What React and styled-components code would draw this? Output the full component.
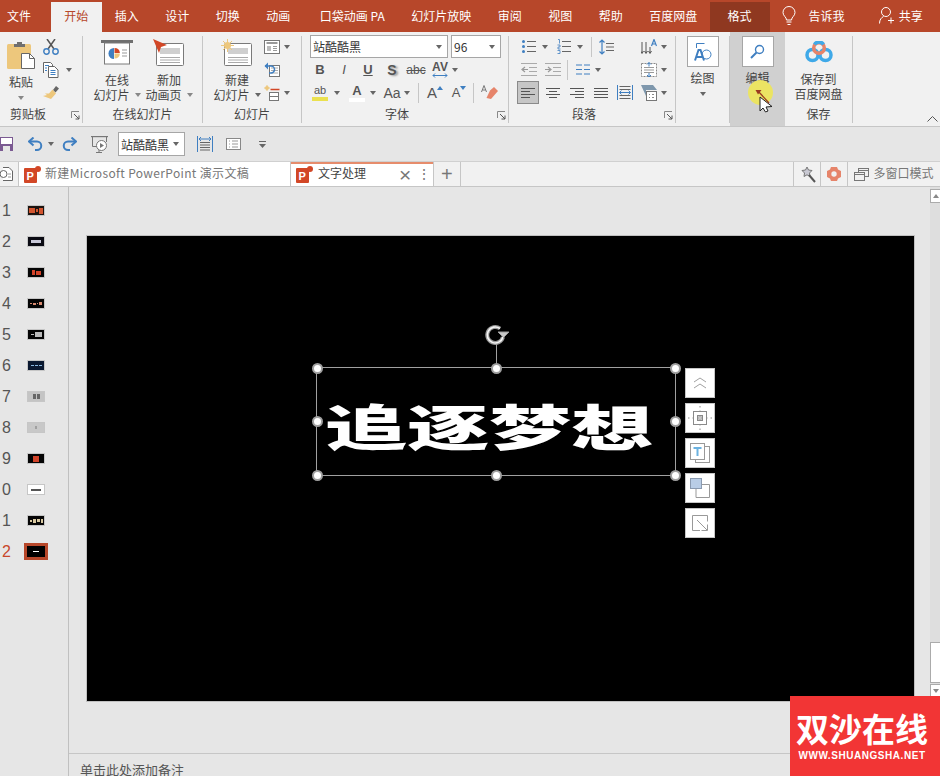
import React from 'react';
import styled, { createGlobalStyle } from 'styled-components';

const RED = '#b7472a';
const CJK = '"Noto Sans CJK SC", "Noto Sans", sans-serif';

const GlobalStyle = createGlobalStyle`
  html, body { margin: 0; padding: 0; width: 940px; height: 776px; overflow: hidden; }
  body { font-family: ${CJK}; color: #444; background: #e6e6e6; }
  * { box-sizing: border-box; }
  svg { display: block; flex: none; }
`;

const Page = styled.div`
  width: 940px;
  height: 776px;
  display: flex;
  flex-direction: column;
  position: relative;
  overflow: hidden;
`;

/* title bar / ribbon tabs */
const TabBar = styled.div`
  height: 32px;
  background: ${RED};
  display: flex;
  align-items: flex-end;
  flex: none;
`;

const RibbonTab = styled.div`
  height: 30px;
  padding: ${({ $first }) => ($first ? '0 20px 3px 7px' : '0 13.25px 3px')};
  margin-left: ${({ $left }) => $left || 0}px;
  display: flex;
  align-items: center;
  font-size: 12px;
  color: ${({ $active }) => ($active ? RED : '#fff')};
  background: ${({ $active }) => ($active ? '#f1f1f1' : 'transparent')};
`;

const FormatTab = styled(RibbonTab)`
  padding: 0 18px 3px;
  background: #8f3820;
`;

const TitleAction = styled.div`
  display: flex;
  align-items: center;
  gap: ${({ $gap }) => $gap}px;
  height: 30px;
  padding-bottom: 3px;
  margin-left: ${({ $left }) => $left}px;
  font-size: 12px;
  color: #fff;
`;

/* ribbon */
const Ribbon = styled.div`
  height: 95px;
  flex: none;
  display: flex;
  background: #f1f1f1;
  border-bottom: 1px solid #c6c6c6;
  position: relative;
`;

const Group = styled.div`
  width: ${({ $w }) => $w}px;
  margin: 4px 0 3px;
  display: flex;
  flex-direction: column;
  border-right: 1px solid #c6c6c6;
  flex: none;
`;

const HighlightGroup = styled(Group)`
  margin: 0;
  padding: 4px 0 3px;
  background: #d0d0d0;
  border-right: none;
  position: relative;
`;

const GroupBody = styled.div`
  flex: 1;
  display: flex;
  padding-left: ${({ $pad }) => $pad || 0}px;
  min-height: 0;
`;

const GroupLabel = styled.div`
  height: 20px;
  flex: none;
  display: grid;
  grid-template-columns: ${({ $shift }) => `${14 - ($shift || 0)}px 1fr ${14 + ($shift || 0)}px`};
  align-items: center;
  font-size: 12px;
  color: #444;
  text-align: center;
`;

const Launcher = styled.svg`
  justify-self: end;
  margin-right: 2px;
  margin-top: 5px;
`;

const BigButton = styled.div`
  width: ${({ $w }) => $w}px;
  display: flex;
  flex-direction: column;
  align-items: center;
  padding-top: ${({ $top }) => $top ?? 5}px;
  flex: none;
`;

const BigIcon = styled.div`
  height: ${({ $h }) => $h || 28}px;
  display: flex;
  align-items: center;
  justify-content: center;
  margin-bottom: ${({ $gap }) => $gap ?? 4}px;
`;

const BigText = styled.div`
  font-size: 12px;
  line-height: 15px;
  color: #444;
  text-align: center;
  white-space: nowrap;
  display: flex;
  align-items: center;
  justify-content: center;
  gap: 5px;
`;

const Caret = styled.i`
  display: block;
  flex: none;
  width: 0;
  height: 0;
  border-left: 3.5px solid transparent;
  border-right: 3.5px solid transparent;
  border-top: 4px solid ${({ $light }) => ($light ? '#888' : '#666')};
`;

const BelowCaret = styled(Caret)`
  margin-top: 7px;
`;

const SmallColumn = styled.div`
  display: flex;
  flex-direction: column;
  gap: 6px;
  margin-left: ${({ $left }) => $left || 0}px;
  padding-top: 2px;
`;

const SmallRow = styled.div`
  height: 17px;
  display: flex;
  align-items: center;
  gap: ${({ $gap }) => $gap ?? 4}px;
`;

const StackRows = styled.div`
  display: flex;
  flex-direction: column;
  flex: ${({ $grow }) => ($grow ? 1 : 'none')};
  margin-top: ${({ $top }) => $top || 0}px;
  margin-bottom: ${({ $bottom }) => $bottom || 0}px;
`;

const ComboRow = styled.div`
  display: flex;
  gap: 3px;
  margin-left: 8px;
`;

const Combo = styled.div`
  width: ${({ $w }) => $w}px;
  height: ${({ $h }) => $h || 23}px;
  background: #fff;
  border: 1px solid #a6a6a6;
  padding: 0 5px 0 2px;
  display: flex;
  align-items: center;
  justify-content: space-between;
  font-size: 12px;
  color: #333;
  flex: none;
`;

const ToolRow = styled.div`
  display: flex;
  align-items: center;
  height: 23px;
  padding-left: ${({ $pad }) => $pad || 0}px;
`;

const Cell = styled.div`
  width: ${({ $w }) => $w || 24}px;
  height: 100%;
  margin-left: ${({ $left }) => $left || 0}px;
  flex: none;
  display: flex;
  align-items: center;
  justify-content: center;
`;

const SelectedCell = styled.div`
  width: 22px;
  height: 23px;
  margin-right: 2px;
  background: #c6c6c6;
  border: 1px solid #8a8a8a;
  flex: none;
  display: flex;
  align-items: center;
  justify-content: center;
`;

const VLine = styled.i`
  display: block;
  flex: none;
  width: 1px;
  height: 20px;
  background: #c6c6c6;
  margin: 0 ${({ $r }) => $r ?? 4}px 0 ${({ $l }) => $l ?? 4}px;
`;

const FontGlyph = styled.span`
  font-family: "Liberation Sans", Arial, sans-serif;
  font-size: ${({ $s }) => $s || 13}px;
  font-weight: ${({ $b }) => ($b ? 700 : 400)};
  font-style: ${({ $i }) => ($i ? 'italic' : 'normal')};
  text-decoration: ${({ $d }) => $d || 'none'};
  text-shadow: ${({ $sh }) => ($sh ? '2px 1px 2px #999' : 'none')};
  color: #555;
  line-height: 1;
`;

const GlyphStack = styled.div`
  display: flex;
  flex-direction: column;
  align-items: center;
`;

const ColorBar = styled.i`
  display: block;
  width: 16px;
  height: 4px;
  margin-top: 1px;
  background: ${({ $c }) => $c};
`;

const BoxButton = styled.div`
  width: 32px;
  height: 31px;
  background: #fff;
  border: 1px solid #a6a6a6;
  display: flex;
  align-items: center;
  justify-content: center;
  margin-bottom: 3px;
`;

const Chevron = styled.svg`
  position: absolute;
  right: 2px;
  bottom: 4px;
`;

const ClickSpot = styled.i`
  position: absolute;
  left: 18px;
  top: 48px;
  width: 25px;
  height: 25px;
  border-radius: 50%;
  background: #ebe463;
`;

const Pointer = styled.svg`
  position: absolute;
  left: 25px;
  top: 56px;
`;

/* quick access toolbar */
const QuickBar = styled.div`
  height: 34px;
  flex: none;
  display: flex;
  align-items: center;
  background: #e6e6e6;
`;

const QuickItem = styled.div`
  margin-left: ${({ $left }) => $left}px;
  flex: none;
  display: flex;
  align-items: center;
`;

/* document tabs */
const DocTabs = styled.div`
  height: 26px;
  flex: none;
  display: flex;
  background: #f1f1f1;
  border-top: 1px solid #d0d0d0;
  border-bottom: 1px solid #c6c6c6;
`;

const DocTab = styled.div`
  width: ${({ $w }) => $w}px;
  display: flex;
  align-items: center;
  flex: none;
  padding-left: ${({ $pad }) => $pad || 0}px;
  font-size: 12px;
  color: ${({ $active }) => ($active ? '#444' : '#777')};
  background: ${({ $white }) => ($white ? '#fff' : 'transparent')};
  border-right: 1px solid #c6c6c6;
  box-shadow: ${({ $active }) => ($active ? 'inset 0 2px 0 #e68c6c' : 'none')};
  overflow: hidden;
  white-space: nowrap;
`;

const DocTabTitle = styled.span`
  margin-left: ${({ $left }) => $left}px;
  margin-top: -3px;
  letter-spacing: ${({ $spread }) => $spread || 0}px;
`;

const IconTab = styled(DocTab)`
  justify-content: center;
  padding: 0;
  gap: 4px;
  border-right: none;
  border-left: 1px solid #c6c6c6;
`;

const TabSpacer = styled.div`
  flex: 1;
`;

const TabX = styled.span`
  margin-left: ${({ $left }) => $left}px;
  font-family: "Liberation Sans", sans-serif;
  font-size: ${({ $s }) => $s}px;
  line-height: 1;
  color: #777;
`;

/* main area */
const Main = styled.div`
  flex: 1;
  display: flex;
  min-height: 0;
`;

const ThumbPanel = styled.div`
  width: 69px;
  flex: none;
  border-right: 1px solid #c0c0c0;
  padding-top: 8px;
  display: flex;
  flex-direction: column;
`;

const ThumbRow = styled.div`
  height: 31px;
  flex: none;
  display: flex;
  align-items: center;
  font-family: "Liberation Sans", sans-serif;
  font-size: 16px;
  color: ${({ $active }) => ($active ? '#c8472a' : '#555')};
`;

const ThumbNum = styled.span`
  width: 24px;
  padding-left: 2px;
  flex: none;
`;

const Thumb = styled.div`
  width: ${({ $active }) => ($active ? 24 : 18)}px;
  height: ${({ $active }) => ($active ? 17 : 11)}px;
  margin-left: ${({ $active }) => ($active ? 0 : 3)}px;
  border: ${({ $active }) => ($active ? `3px solid ${RED}` : '1px solid #c6c6c6')};
  background: ${({ $bg }) => $bg};
  flex: none;
`;

const Specks = styled.div`
  height: 100%;
  display: flex;
  align-items: center;
  justify-content: center;
  gap: 1px;
`;

const Speck = styled.i`
  display: block;
  width: ${({ $w }) => $w}px;
  height: ${({ $h }) => $h}px;
  background: ${({ $c }) => $c};
`;

const Workspace = styled.div`
  flex: 1;
  display: flex;
  flex-direction: column;
  min-width: 0;
`;

const Stage = styled.div`
  flex: 1;
  padding: 48px 0 0 17px;
  min-height: 0;
`;

const Slide = styled.div`
  width: 829px;
  height: 467px;
  background: #000;
  border: 1px solid #c0c0c0;
  position: relative;
`;

const Selection = styled.div`
  position: absolute;
  left: 229px;
  top: 131px;
  width: 360px;
  height: 109px;
  border: 1px solid #a0a0a0;
  display: flex;
  align-items: center;
  justify-content: center;
`;

const SlideText = styled.div`
  color: #fff;
  font-family: ${CJK};
  font-size: 82px;
  line-height: 1;
  font-weight: 900;
  white-space: nowrap;
  transform: translate(-7px, 3px) scaleY(0.6);
`;

const Handle = styled.i`
  position: absolute;
  left: ${({ $x }) => $x}%;
  top: ${({ $y }) => $y}%;
  width: 11px;
  height: 11px;
  margin: -5.5px 0 0 -5.5px;
  border-radius: 50%;
  background: #fff;
  border: 2px solid #a0a0a0;
`;

const RotateStem = styled.i`
  position: absolute;
  left: 50%;
  top: -24px;
  width: 1px;
  height: 24px;
  background: #a0a0a0;
`;

const RotateHandle = styled.svg`
  position: absolute;
  left: 50%;
  top: -44px;
  margin-left: -11px;
`;

const SideTools = styled.div`
  position: absolute;
  left: 598px;
  top: 132px;
  display: flex;
  flex-direction: column;
  gap: 5px;
`;

const SideTool = styled.div`
  width: 30px;
  height: 30px;
  background: #fff;
  border: 1px solid #c6c6c6;
  display: flex;
  align-items: center;
  justify-content: center;
`;

const Notes = styled.div`
  height: 23px;
  flex: none;
  border-top: 1px solid #c6c6c6;
  padding: 6px 0 0 11px;
  font-size: 13px;
  line-height: 20px;
  color: #555;
  white-space: nowrap;
`;

const ScrollBar = styled.div`
  width: 10px;
  flex: none;
  background: #dedede;
  display: flex;
  flex-direction: column;
  padding-top: 2px;
`;

const ScrollButton = styled.div`
  width: 10px;
  height: 14px;
  background: #fff;
  border: 1px solid #ababab;
  border-right: none;
  display: flex;
  align-items: center;
  justify-content: center;
`;

const ScrollThumb = styled.div`
  width: 10px;
  height: 41px;
  margin: 439px 0 1px;
  background: #fff;
  border: 1px solid #ababab;
  border-right: none;
`;

const ScrollUp = styled.i`
  display: block;
  width: 0;
  height: 0;
  border-left: 3.5px solid transparent;
  border-right: 3.5px solid transparent;
  border-bottom: 4px solid #888;
`;

const Watermark = styled.div`
  position: absolute;
  right: 0;
  bottom: 0;
  width: 150px;
  height: 80px;
  background: #f23535;
  color: #fff;
  display: flex;
  flex-direction: column;
  align-items: center;
  padding: 14px 6px 0 0;
`;

const MarkTitle = styled.div`
  font-size: 33px;
  line-height: 36px;
  font-weight: 700;
  white-space: nowrap;
`;

const MarkUrl = styled.div`
  font-family: "Liberation Sans", sans-serif;
  font-size: 10px;
  line-height: 10px;
  font-weight: 700;
  letter-spacing: 0.55px;
  margin-top: 5px;
  white-space: nowrap;
`;

/* icons */
const Paste = () => (
  <svg width="29" height="28" viewBox="0 0 29 28">
    <rect x="0" y="3" width="24" height="25" rx="1.5" fill="#edc77c" />
    <path d="M7 6V3h3V1h5v2h3v3z" fill="#6f6f6f" />
    <path d="M14.5 12.5h8l5 5v10h-13z" fill="#fff" stroke="#666" />
    <path d="M22.5 12.5v5h5" fill="none" stroke="#666" />
  </svg>
);
const Scissors = () => (
  <svg width="16" height="16" viewBox="0 0 16 16" fill="none">
    <path d="M4 0l7 10M12 0L5 10" stroke="#555" strokeWidth="1.5" />
    <circle cx="3.5" cy="12.5" r="2.7" stroke="#3f7fc1" strokeWidth="1.4" />
    <circle cx="12.5" cy="12.5" r="2.7" stroke="#3f7fc1" strokeWidth="1.4" />
  </svg>
);
const CopyDocs = () => (
  <svg width="16" height="16" viewBox="0 0 16 16" fill="none">
    <path d="M.5 11V.5h7l2 2V5" fill="#fff" stroke="#666" />
    <path d="M5.5 4.5h6l3.500 3.500v7.500H5.500z" fill="#fff" stroke="#666" />
    <path d="M2 3.500h4M2 6h2M2 8.500h2M7.500 8.500h5M7.500 10.500h5M7.500 12.500h5" stroke="#3f7fc1" />
  </svg>
);
const Brush = () => (
  <svg width="17" height="16" viewBox="0 0 17 16">
    <path d="M10 5l3-4 3 2.500-3.500 4z" fill="#666" />
    <path d="M9.500 4.500L13 8.500 8 14 0 11l4-1-2-1.500 4 0z" fill="#edc77c" />
  </svg>
);
const OnlineSlides = () => (
  <svg width="33" height="25" viewBox="0 0 33 25">
    <rect x="0" y="0" width="32" height="3" fill="#6f6f6f" />
    <rect x="3.500" y="3" width="25" height="21" fill="#fff" stroke="#7a7a7a" />
    <path d="M13 8a5.500 5.500 0 1 0 0 11z" fill="#3f7fc1" />
    <path d="M13.500 8a5.500 5.500 0 0 1 5.400 5H13.500z" fill="#d24726" />
    <path d="M13.500 13.500h5.400a5.500 5.500 0 0 1-5.400 5z" fill="#edc77c" />
    <path d="M21 10h5M21 13h5M21 16h5" stroke="#999" />
  </svg>
);
const SlideBody = () => (
  <>
    <rect x="3.500" y="4.500" width="27" height="22" rx="1" fill="#fff" stroke="#7a7a7a" />
    <rect x="7" y="9" width="20" height="6" fill="#cfcfcf" />
    <path d="M7 18.500h20M7 21h20M7 23.500h20" stroke="#aaa" />
  </>
);
const AnimSlide = () => (
  <svg width="32" height="27" viewBox="0 0 32 27">
    <SlideBody />
    <path d="M0 0l14 6-6 2-2 6z" fill="#d24726" />
  </svg>
);
const NewSlide = () => (
  <svg width="32" height="27" viewBox="0 0 32 27">
    <SlideBody />
    <circle cx="6.500" cy="6.500" r="3.500" fill="#edc77c" />
    <path d="M6.500 0v13M0 6.500h13M2 2l9 9M11 2l-9 9" stroke="#edc77c" />
  </svg>
);
const LayoutIcon = () => (
  <svg width="16" height="14" viewBox="0 0 16 14" fill="none">
    <rect x=".5" y=".5" width="15" height="13" fill="#fff" stroke="#777" />
    <path d="M2.500 3h11" stroke="#999" strokeWidth="2" />
    <path d="M3 6h4v5H3z" fill="#bbb" />
    <path d="M9 6.500h4M9 8.500h4M9 10.500h4" stroke="#999" />
  </svg>
);
const ResetIcon = () => (
  <svg width="16" height="15" viewBox="0 0 16 15" fill="none">
    <rect x="5.500" y="3.500" width="10" height="11" fill="#fff" stroke="#777" />
    <path d="M7 6h7M7 8.500h7M7 11h7" stroke="#aaa" />
    <path d="M1 4h6a3 3 0 0 1 0 7H5" stroke="#3f7fc1" strokeWidth="1.500" />
    <path d="M4 .5L.5 4 4 7.500z" fill="#3f7fc1" />
  </svg>
);
const SectionIcon = () => (
  <svg width="16" height="16" viewBox="0 0 16 16" fill="none">
    <circle cx="3" cy="3" r="2" fill="#edc77c" />
    <path d="M3 0v6M0 3h6" stroke="#edc77c" />
    <path d="M6.500 4.500h9" stroke="#d24726" strokeWidth="1.500" />
    <rect x="5.500" y="7.500" width="9" height="8" fill="#fff" stroke="#777" />
    <path d="M5.500 11.500h9" stroke="#777" />
  </svg>
);
const Corner = () => (
  <Launcher width="9" height="9" viewBox="0 0 9 9" fill="none">
    <path d="M.5 7V.5H8" stroke="#888" />
    <path d="M3 3l5 5M8 4.500V8H4.500" stroke="#555" />
  </Launcher>
);
const AV = () => (
  <GlyphStack>
    <FontGlyph $s={12} $b>AV</FontGlyph>
    <svg width="16" height="5" viewBox="0 0 16 5" fill="none">
      <path d="M1 2.500h14M3 .5l-2 2 2 2M13 .5l2 2-2 2" stroke="#3f7fc1" />
    </svg>
  </GlyphStack>
);
const GrowFont = ({ up, c }) => (
  <>
    <FontGlyph $s={up ? 15 : 13}>A</FontGlyph>
    <svg width="6" height="4" viewBox="0 0 6 4" style={{ marginBottom: 10 }}>
      <path d={up ? 'M0 4l3-4 3 4z' : 'M0 0l3 4 3-4z'} fill={c} />
    </svg>
  </>
);
const Eraser = () => (
  <svg width="17" height="16" viewBox="0 0 17 16">
    <path d="M9 5.500l4-3.500 4 4-7 8-4.500-1z" fill="#e6846a" />
    <path d="M.5 7L3 .5 5.500 7M1.500 5h3" fill="none" stroke="#777" />
  </svg>
);
const ListIcon = ({ numbered }) => (
  <svg width="14" height="15" viewBox="0 0 14 15" fill="none">
    <path d="M5 2.500h9M5 7.500h9M5 12.500h9" stroke="#666" />
    {numbered ? (
      <path d="M1 .5h1.500v4M.5 6h2.500v2h-2v2h2.500M.5 11.500H3v3H.5" stroke="#3f7fc1" strokeWidth=".8" />
    ) : (
      <>
        <circle cx="1.500" cy="2.500" r="1.500" fill="#3f7fc1" />
        <circle cx="1.500" cy="7.500" r="1.500" fill="#3f7fc1" />
        <circle cx="1.500" cy="12.500" r="1.500" fill="#3f7fc1" />
      </>
    )}
  </svg>
);
const SpacingIcon = () => (
  <svg width="15" height="16" viewBox="0 0 15 16" fill="none">
    <path d="M3 1v14M.5 3.500L3 1l2.500 2.500M.5 12.500L3 15l2.500-2.500" stroke="#3f7fc1" strokeWidth="1.200" />
    <path d="M7 4.500h8M7 8h8M7 11.500h8" stroke="#666" />
  </svg>
);
const IndentIcon = ({ out }) => (
  <svg width="16" height="13" viewBox="0 0 16 13" fill="none">
    <path d="M0 .5h16M8 4.500h8M8 8.500h8M0 12.500h16" stroke="#aaa" />
    <path d={out ? 'M7 6.500H2M4 4L1 6.500 4 9' : 'M0 6.500h5M3 4l3 2.500L3 9'} stroke="#999" strokeWidth="1.200" />
  </svg>
);
const ColumnsIcon = () => (
  <svg width="14" height="11" viewBox="0 0 14 11" fill="none">
    <path d="M0 1h6M8 1h6M0 5.500h6M8 5.500h6M0 10h6M8 10h6" stroke="#3f7fc1" />
  </svg>
);
const alignRows = {
  left: [14, 9, 14, 9],
  center: [14, 8, 14, 8],
  right: [14, 9, 14, 9],
  justify: [14, 14, 14, 14],
};
const AlignIcon = ({ mode }) => (
  <svg width="14" height="10" viewBox="0 0 14 10" fill="none">
    {alignRows[mode].map((w, i) => {
      const x = mode === 'center' ? (14 - w) / 2 : mode === 'right' ? 14 - w : 0;
      return <path key={i} d={`M${x} ${i * 3 + 0.5}h${w}`} stroke="#555" />;
    })}
  </svg>
);
const DistributeIcon = () => (
  <svg width="16" height="15" viewBox="0 0 16 15" fill="none">
    <path d="M.5 0v15M15.500 0v15" stroke="#3f7fc1" />
    <path d="M2.500 1.500h11M2.500 4.500h11M2.500 10.500h11M2.500 13.500h11" stroke="#666" />
    <path d="M2.500 7.500h11M4.500 5.500l-2 2 2 2M11.500 5.500l2 2-2 2" stroke="#3f7fc1" />
  </svg>
);
const TextDirIcon = () => (
  <svg width="16" height="16" viewBox="0 0 16 16" fill="none">
    <path d="M1 3v11M5 3v11M9 8v6M-.5 12L1 14.500 2.500 12M3.500 12L5 14.500 6.500 12M7.500 12L9 14.500 10.500 12" stroke="#555" />
    <path d="M10.500 7L13 .5 15.500 7M11.500 5h3" stroke="#3f7fc1" strokeWidth="1.200" />
  </svg>
);
const TextAlignIcon = () => (
  <svg width="16" height="16" viewBox="0 0 16 16" fill="none">
    <rect x=".5" y="1.500" width="15" height="13" fill="#fff" stroke="#888" strokeDasharray="2 1" />
    <path d="M3 8h10M3 10.500h10M3 5.500h10" stroke="#999" />
    <path d="M8 .5v4M6 2.500l2-2 2 2M8 11v4M6 13l2 2 2-2" stroke="#3f7fc1" />
  </svg>
);
const SmartIcon = () => (
  <svg width="17" height="16" viewBox="0 0 17 16" fill="none">
    <path d="M0 0h12l4 5H5v6z" fill="#7e97ac" />
    <rect x="5.500" y="6.500" width="10" height="9" fill="#fff" stroke="#777" />
    <path d="M8 9.500h1M8 12.500h1M11 9.500h2M11 12.500h2" stroke="#888" />
  </svg>
);
const DrawIcon = () => (
  <svg width="18" height="18" viewBox="0 0 18 18" fill="none">
    <path d="M2.500 5V.5h8" stroke="#3f7fc1" />
    <circle cx="12.500" cy="11.500" r="4.500" fill="#fff" stroke="#3f7fc1" />
    <path d="M1 17.500L4.500 7h2L10 17.500M2.500 14h6" stroke="#3f7fc1" strokeWidth="2" />
  </svg>
);
const Search = () => (
  <svg width="15" height="15" viewBox="0 0 15 15" fill="none">
    <circle cx="9.500" cy="5.500" r="4" stroke="#3f7fc1" strokeWidth="1.400" />
    <path d="M6.500 8.500L1 14" stroke="#3f7fc1" strokeWidth="2" />
  </svg>
);
const BaiduCloud = () => (
  <svg width="28" height="22" viewBox="0 0 28 22" fill="none">
    <circle cx="7.500" cy="14" r="5.500" stroke="#3fa9e8" strokeWidth="3.500" />
    <circle cx="20.500" cy="14" r="5.500" stroke="#3fa9e8" strokeWidth="3.500" />
    <circle cx="14" cy="7" r="5.300" stroke="#e6846a" strokeWidth="3.500" />
    <path d="M9.500 3.500A5.300 5.300 0 0 1 18.500 3.500" stroke="#3fa9e8" strokeWidth="3.500" />
  </svg>
);
const Bulb = () => (
  <svg width="14" height="20" viewBox="0 0 14 20" fill="none" stroke="#fff">
    <path d="M4.500 14c0-3-3.500-4-3.500-7.500a6 6 0 0 1 12 0C13 10 9.500 11 9.500 14z" />
    <path d="M4.500 16h5M5.500 18.500h3" />
  </svg>
);
const UserPlus = () => (
  <svg width="15" height="17" viewBox="0 0 15 17" fill="none" stroke="#fff">
    <circle cx="7" cy="5" r="4.500" />
    <path d="M.5 16.500c0-4 2-6 4-7M9 13.500h6M12 10.500v6" />
  </svg>
);
const SaveIcon = () => (
  <svg width="13" height="14" viewBox="0 0 13 14">
    <rect x="0" y="0" width="13" height="14" fill="#7b5a92" />
    <rect x="1" y="1" width="11" height="6" fill="#fff" />
    <rect x="3" y="9" width="7" height="5" fill="#e6e6e6" />
  </svg>
);
const Undo = ({ flip }) => (
  <svg width="15" height="14" viewBox="0 0 15 14" fill="none" style={flip ? { transform: 'scaleX(-1)' } : undefined}>
    <path d="M2 4.500h7a4 4 0 0 1 0 8.500H7" stroke="#3f7fc1" strokeWidth="2" />
    <path d="M5.500 .5L1 4.500l4.500 4" stroke="#3f7fc1" strokeWidth="2" />
  </svg>
);
const PresentIcon = () => (
  <svg width="17" height="17" viewBox="0 0 17 17" fill="none">
    <path d="M0 .5h17" stroke="#777" strokeWidth="1.400" />
    <path d="M1.500 1v9.500H6M15.500 1v5" stroke="#777" />
    <circle cx="10.500" cy="9.500" r="5" fill="#fff" stroke="#777" />
    <path d="M9 7l4 2.500L9 12z" fill="#777" />
    <path d="M5 16.500h6M8 14v2" stroke="#777" />
  </svg>
);
const FitWidth = () => (
  <svg width="16" height="16" viewBox="0 0 16 16" fill="none">
    <path d="M.5 0v16M15.500 0v16" stroke="#3f7fc1" />
    <path d="M3 6.500h10M3 9h10M3 11.500h10M3 14h10" stroke="#666" />
    <path d="M2 3h12M4 1L2 3l2 2M12 1l2 2-2 2" stroke="#3f7fc1" />
  </svg>
);
const Outline = () => (
  <svg width="15" height="12" viewBox="0 0 15 12" fill="none">
    <rect x=".5" y=".5" width="14" height="11" fill="#fff" stroke="#888" />
    <path d="M3 3h1M3 6h1M3 9h1M6 3h6M6 6h6M6 9h6" stroke="#999" />
  </svg>
);
const MoreCaret = () => (
  <svg width="7" height="7" viewBox="0 0 7 7">
    <path d="M0 0h7v1H0zM0 3h7L3.500 7z" fill="#666" />
  </svg>
);
const PptBadge = () => (
  <svg width="17" height="17" viewBox="0 0 17 17">
    <rect x="0" y="2" width="13" height="15" rx="1" fill="#d24726" />
    <circle cx="14" cy="3" r="3" fill="#d24726" />
    <text x="2.500" y="13.500" fontSize="11" fontWeight="700" fontFamily="Liberation Sans" fill="#fff">P</text>
  </svg>
);
const HistoryDoc = () => (
  <svg width="13" height="14" viewBox="0 0 13 14" fill="none">
    <path d="M3 .5h6l3.500 3.500v9.500H3" fill="#fff" stroke="#666" />
    <circle cx="3.500" cy="7" r="3.500" fill="#fff" stroke="#666" />
    <path d="M8 7h3M8 10h3" stroke="#999" />
  </svg>
);
const Wand = () => (
  <svg width="17" height="17" viewBox="0 0 17 17" fill="none">
    <path d="M8 1l1.500 3 3.500.5-2.500 2.500.5 3.500-3-1.700-3 1.700.5-3.500L3 4.500 6.500 4z" fill="#c8c8d2" stroke="#777" />
    <path d="M10 9l6 7" stroke="#555" strokeWidth="2" />
  </svg>
);
const Flower = () => (
  <svg width="16" height="16" viewBox="0 0 16 16">
    <path d="M5 1h6l1 2.500L15 5v6l-3 1.500L11 15H5l-1-2.500L1 11V5l3-1.500z" fill="#e6846a" />
    <circle cx="8" cy="8" r="2.700" fill="#f1f1f1" />
  </svg>
);
const Windows = () => (
  <svg width="15" height="13" viewBox="0 0 15 13" fill="none">
    <rect x="4.500" y=".5" width="10" height="8" fill="#f1f1f1" stroke="#777" />
    <path d="M4.500 2.500h10" stroke="#777" />
    <rect x=".5" y="4.500" width="10" height="8" fill="#f1f1f1" stroke="#777" />
    <path d="M.5 6.500h10" stroke="#777" />
  </svg>
);
const Rotate = () => (
  <RotateHandle width="26" height="22" viewBox="0 0 26 22" fill="none">
    <path d="M15 4.500A8 8 0 1 0 18 13" stroke="#9a9a9a" strokeWidth="4" />
    <path d="M15 4.500A8 8 0 1 0 18 13" stroke="#f4f4f4" strokeWidth="1.600" />
    <path d="M13 8h11l-5.500 5.500z" fill="#c8c8c8" stroke="#9a9a9a" />
  </RotateHandle>
);
const ChevronsUp = () => (
  <svg width="14" height="12" viewBox="0 0 14 12" fill="none">
    <path d="M1 5l6-4 6 4M1 11l6-4 6 4" stroke="#a0a0a0" />
  </svg>
);
const Crosshair = () => (
  <svg width="24" height="24" viewBox="0 0 24 24" fill="none">
    <rect x="5.500" y="5.500" width="13" height="13" stroke="#8a8a8a" />
    <rect x="9.500" y="9.500" width="5" height="5" fill="#c8c8c8" stroke="#8a8a8a" />
    <path d="M0 12h24M12 0v24" stroke="#8a8a8a" strokeDasharray="1.500 3" />
  </svg>
);
const TextBoxes = () => (
  <svg width="20" height="20" viewBox="0 0 20 20" fill="none">
    <rect x="5.500" y="3.500" width="14" height="16" fill="#fff" stroke="#999" />
    <rect x=".5" y=".5" width="14" height="16" fill="#fff" stroke="#999" />
    <path d="M3.500 5h8M7.500 5v8" stroke="#6bb2e0" strokeWidth="2" />
  </svg>
);
const ShapeStack = () => (
  <svg width="20" height="20" viewBox="0 0 20 20" fill="none">
    <path d="M6 6.500h13.500v13H6z" stroke="#999" />
    <rect x=".5" y=".5" width="11" height="10" fill="#b9cde6" stroke="#8a9ab0" />
  </svg>
);
const Resize = () => (
  <svg width="16" height="16" viewBox="0 0 16 16" fill="none">
    <path d="M15.500 6.500V.5H.5v15H8" stroke="#999" />
    <path d="M5 5l10 10M9.500 15.500h6v-6" stroke="#999" />
  </svg>
);

/* speck rows stand in for the tiny slide previews */
const thumbs = [
  { bg: '#1c1410', c: '#d2552f', specks: [[6, 5], [2, 3], [4, 6]] },
  { bg: '#0a0a12', c: '#c8c8d8', specks: [[10, 3]] },
  { bg: '#050505', c: '#d2442a', specks: [[3, 5], [5, 4]] },
  { bg: '#050505', c: '#d88a70', specks: [[2, 1], [3, 2], [1, 1], [3, 3]] },
  { bg: '#050505', c: '#bbbbbb', specks: [[3, 1], [7, 5]] },
  { bg: '#0a1830', c: '#8ab8e0', specks: [[3, 1], [3, 1], [3, 1]] },
  { bg: '#c4c4c4', c: '#666666', specks: [[3, 5], [3, 5]] },
  { bg: '#c8c8c8', c: '#a0a0a0', specks: [[2, 3]] },
  { bg: '#050505', c: '#d2442a', specks: [[6, 6]] },
  { bg: '#ffffff', c: '#555555', specks: [[10, 2]] },
  { bg: '#050505', c: '#d8c8a0', specks: [[2, 2], [3, 4], [3, 3], [2, 4]] },
  { bg: '#000000', c: '#ffffff', specks: [[6, 1]] },
];

const handlePoints = [
  [0, 0], [50, 0], [100, 0], [0, 50], [100, 50], [0, 100], [50, 100], [100, 100],
];

const App = () => {
  return (
    <Page>
      <GlobalStyle />
      <TabBar>
        <RibbonTab $first>文件</RibbonTab>
        <RibbonTab $active>开始</RibbonTab>
        <RibbonTab>插入</RibbonTab>
        <RibbonTab>设计</RibbonTab>
        <RibbonTab>切换</RibbonTab>
        <RibbonTab>动画</RibbonTab>
        <RibbonTab $left={3}>口袋动画 PA</RibbonTab>
        <RibbonTab>幻灯片放映</RibbonTab>
        <RibbonTab>审阅</RibbonTab>
        <RibbonTab>视图</RibbonTab>
        <RibbonTab>帮助</RibbonTab>
        <RibbonTab>百度网盘</RibbonTab>
        <FormatTab $left={-1}>格式</FormatTab>
        <TitleAction $left={12} $gap={13}><Bulb />告诉我</TitleAction>
        <TitleAction $left={34} $gap={5}><UserPlus />共享</TitleAction>
      </TabBar>

      <Ribbon>
        <Group $w={83}>
          <GroupBody $pad={6}>
            <BigButton $w={30}>
              <BigIcon $gap={5}><Paste /></BigIcon>
              <BigText>粘贴</BigText>
              <BelowCaret $light />
            </BigButton>
            <SmallColumn $left={7}>
              <SmallRow><Scissors /></SmallRow>
              <SmallRow $gap={7}><CopyDocs /><Caret /></SmallRow>
              <SmallRow><Brush /></SmallRow>
            </SmallColumn>
          </GroupBody>
          <GroupLabel $shift={13}><span />剪贴板<Corner /></GroupLabel>
        </Group>

        <Group $w={120}>
          <GroupBody $pad={8}>
            <BigButton $w={52} $top={2}>
              <BigIcon $gap={6}><OnlineSlides /></BigIcon>
              <BigText>在线</BigText>
              <BigText>幻灯片<Caret $light /></BigText>
            </BigButton>
            <BigButton $w={52} $top={2}>
              <BigIcon $gap={6}><AnimSlide /></BigIcon>
              <BigText>新加</BigText>
              <BigText>动画页<Caret $light /></BigText>
            </BigButton>
          </GroupBody>
          <GroupLabel><span />在线幻灯片<span /></GroupLabel>
        </Group>

        <Group $w={99}>
          <GroupBody $pad={8}>
            <BigButton $w={52} $top={2}>
              <BigIcon $gap={6}><NewSlide /></BigIcon>
              <BigText>新建</BigText>
              <BigText>幻灯片<Caret /></BigText>
            </BigButton>
            <SmallColumn $left={1}>
              <SmallRow><LayoutIcon /><Caret /></SmallRow>
              <SmallRow><ResetIcon /></SmallRow>
              <SmallRow><SectionIcon /><Caret /></SmallRow>
            </SmallColumn>
          </GroupBody>
          <GroupLabel><span />幻灯片<span /></GroupLabel>
        </Group>

        <Group $w={207}>
          <StackRows $top={-1} $bottom={-2}>
            <ComboRow>
              <Combo $w={138}>站酷酷黑<Caret /></Combo>
              <Combo $w={50}>96<Caret /></Combo>
            </ComboRow>
            <ToolRow $pad={6}>
              <Cell><FontGlyph $b $s={13}>B</FontGlyph></Cell>
              <Cell><FontGlyph $i $s={13}>I</FontGlyph></Cell>
              <Cell><FontGlyph $b $s={13} $d="underline">U</FontGlyph></Cell>
              <Cell><FontGlyph $b $s={14} $sh>S</FontGlyph></Cell>
              <Cell><FontGlyph $s={12} $d="line-through">abc</FontGlyph></Cell>
              <Cell><AV /></Cell>
              <Caret />
            </ToolRow>
            <ToolRow $pad={6}>
              <Cell>
                <GlyphStack>
                  <FontGlyph $s={11}>ab</FontGlyph>
                  <ColorBar $c="#ebe14f" />
                </GlyphStack>
              </Cell>
              <Cell $w={10}><Caret /></Cell>
              <Cell $left={3}>
                <GlyphStack>
                  <FontGlyph $s={13} $b>A</FontGlyph>
                  <ColorBar $c="#fff" />
                </GlyphStack>
              </Cell>
              <Cell $w={8}><Caret /></Cell>
              <Cell $left={3}><FontGlyph $s={14}>Aa</FontGlyph></Cell>
              <Cell $w={6}><Caret /></Cell>
              <VLine $l={8} $r={4} />
              <Cell><GrowFont up c="#3f7fc1" /></Cell>
              <Cell><GrowFont c="#3f7fc1" /></Cell>
              <VLine $l={2} $r={3} />
              <Cell><Eraser /></Cell>
            </ToolRow>
          </StackRows>
          <GroupBody />
          <GroupLabel $shift={8}><span />字体<Corner /></GroupLabel>
        </Group>

        <Group $w={167}>
          <GroupBody $pad={8}>
            <StackRows $grow $top={-1} $bottom={-1}>
              <ToolRow>
                <Cell><ListIcon /></Cell>
                <Cell $w={8}><Caret /></Cell>
                <Cell $left={3}><ListIcon numbered /></Cell>
                <Cell $w={8}><Caret /></Cell>
                <VLine $l={7} $r={3} />
                <Cell $w={23}><SpacingIcon /></Cell>
              </ToolRow>
              <ToolRow>
                <Cell><IndentIcon out /></Cell>
                <Cell><IndentIcon /></Cell>
                <VLine $l={2} $r={3} />
                <Cell $w={24}><ColumnsIcon /></Cell>
                <Caret />
              </ToolRow>
              <ToolRow>
                <SelectedCell><AlignIcon mode="left" /></SelectedCell>
                <Cell><AlignIcon mode="center" /></Cell>
                <Cell><AlignIcon mode="right" /></Cell>
                <Cell><AlignIcon mode="justify" /></Cell>
                <Cell><DistributeIcon /></Cell>
              </ToolRow>
            </StackRows>
            <StackRows $top={-1} $bottom={-1}>
              <ToolRow><Cell $w={24}><TextDirIcon /></Cell><Caret /></ToolRow>
              <ToolRow><Cell $w={24}><TextAlignIcon /></Cell><Caret /></ToolRow>
              <ToolRow><Cell $w={24}><SmartIcon /></Cell><Caret /></ToolRow>
            </StackRows>
            <Cell $w={12} />
          </GroupBody>
          <GroupLabel $shift={8}><span />段落<Corner /></GroupLabel>
        </Group>

        <Group $w={54}>
          <GroupBody>
            <BigButton $w={53} $top={0}>
              <BoxButton><DrawIcon /></BoxButton>
              <BigText>绘图</BigText>
              <BelowCaret />
            </BigButton>
          </GroupBody>
        </Group>

        <HighlightGroup $w={55}>
          <GroupBody>
            <BigButton $w={55} $top={0}>
              <BoxButton><Search /></BoxButton>
              <BigText>编辑</BigText>
            </BigButton>
          </GroupBody>
          <ClickSpot />
          <Pointer width="20" height="26" viewBox="0 0 20 26">
            <path d="M5 9v14l3-3 2.500 4 2.500-1-2-4 6-.500z" fill="#fff" stroke="#222" />
            <path d="M3 3l11 12" stroke="#9a3a20" strokeWidth="1.300" />
            <path d="M.5 2h6L3 6.500z" fill="#9a3a20" />
          </Pointer>
        </HighlightGroup>

        <Group $w={68}>
          <GroupBody>
            <BigButton $w={67} $top={5}>
              <BigIcon $h={22} $gap={8}><BaiduCloud /></BigIcon>
              <BigText>保存到</BigText>
              <BigText>百度网盘</BigText>
            </BigButton>
          </GroupBody>
          <GroupLabel><span />保存<span /></GroupLabel>
        </Group>

        <Chevron width="11" height="6" viewBox="0 0 11 6" fill="none">
          <path d="M.5 5.500l5-5 5 5" stroke="#555" />
        </Chevron>
      </Ribbon>

      <QuickBar>
        <QuickItem $left={0}><SaveIcon /></QuickItem>
        <QuickItem $left={15}><Undo /></QuickItem>
        <QuickItem $left={5}><Caret /></QuickItem>
        <QuickItem $left={8}><Undo flip /></QuickItem>
        <QuickItem $left={14}><PresentIcon /></QuickItem>
        <QuickItem $left={10}><Combo $w={67} $h={24}>站酷酷黑<Caret /></Combo></QuickItem>
        <QuickItem $left={12}><FitWidth /></QuickItem>
        <QuickItem $left={13}><Outline /></QuickItem>
        <QuickItem $left={18}><MoreCaret /></QuickItem>
      </QuickBar>

      <DocTabs>
        <DocTab $w={19} $pad={0}><HistoryDoc /></DocTab>
        <DocTab $w={272} $pad={5} $white>
          <PptBadge />
          <DocTabTitle $left={4} $spread={0.35}>新建Microsoft PowerPoint 演示文稿</DocTabTitle>
        </DocTab>
        <DocTab $w={143} $pad={5} $white $active>
          <PptBadge />
          <DocTabTitle $left={5}>文字处理</DocTabTitle>
          <TabX $left={33} $s={21}>×</TabX>
          <TabX $left={6} $s={14}>⋮</TabX>
        </DocTab>
        <DocTab $w={27} $pad={7}><TabX $left={0} $s={20}>+</TabX></DocTab>
        <TabSpacer />
        <IconTab $w={27}><Wand /></IconTab>
        <IconTab $w={27}><Flower /></IconTab>
        <IconTab $w={93}><Windows /><DocTabTitle $left={0}>多窗口模式</DocTabTitle></IconTab>
      </DocTabs>

      <Main>
        <ThumbPanel>
          {thumbs.map((t, i) => (
            <ThumbRow key={i} $active={i === 11}>
              <ThumbNum>{(i + 1) % 10}</ThumbNum>
              <Thumb $bg={t.bg} $active={i === 11}>
                <Specks>
                  {t.specks.map(([w, h], j) => (
                    <Speck key={j} $w={w} $h={h} $c={t.c} />
                  ))}
                </Specks>
              </Thumb>
            </ThumbRow>
          ))}
        </ThumbPanel>

        <Workspace>
          <Stage>
            <Slide>
              <Selection>
                <SlideText>追逐梦想</SlideText>
                <RotateStem />
                <Rotate />
                {handlePoints.map(([x, y]) => (
                  <Handle key={`${x}-${y}`} $x={x} $y={y} />
                ))}
              </Selection>
              <SideTools>
                <SideTool><ChevronsUp /></SideTool>
                <SideTool><Crosshair /></SideTool>
                <SideTool><TextBoxes /></SideTool>
                <SideTool><ShapeStack /></SideTool>
                <SideTool><Resize /></SideTool>
              </SideTools>
            </Slide>
          </Stage>
          <Notes>单击此处添加备注</Notes>
        </Workspace>

        <ScrollBar>
          <ScrollButton><ScrollUp /></ScrollButton>
          <ScrollThumb />
          <ScrollButton><Caret $light /></ScrollButton>
        </ScrollBar>
      </Main>

      <Watermark>
        <MarkTitle>双沙在线</MarkTitle>
        <MarkUrl>WWW.SHUANGSHA.NET</MarkUrl>
      </Watermark>
    </Page>
  );
};

export default App;
